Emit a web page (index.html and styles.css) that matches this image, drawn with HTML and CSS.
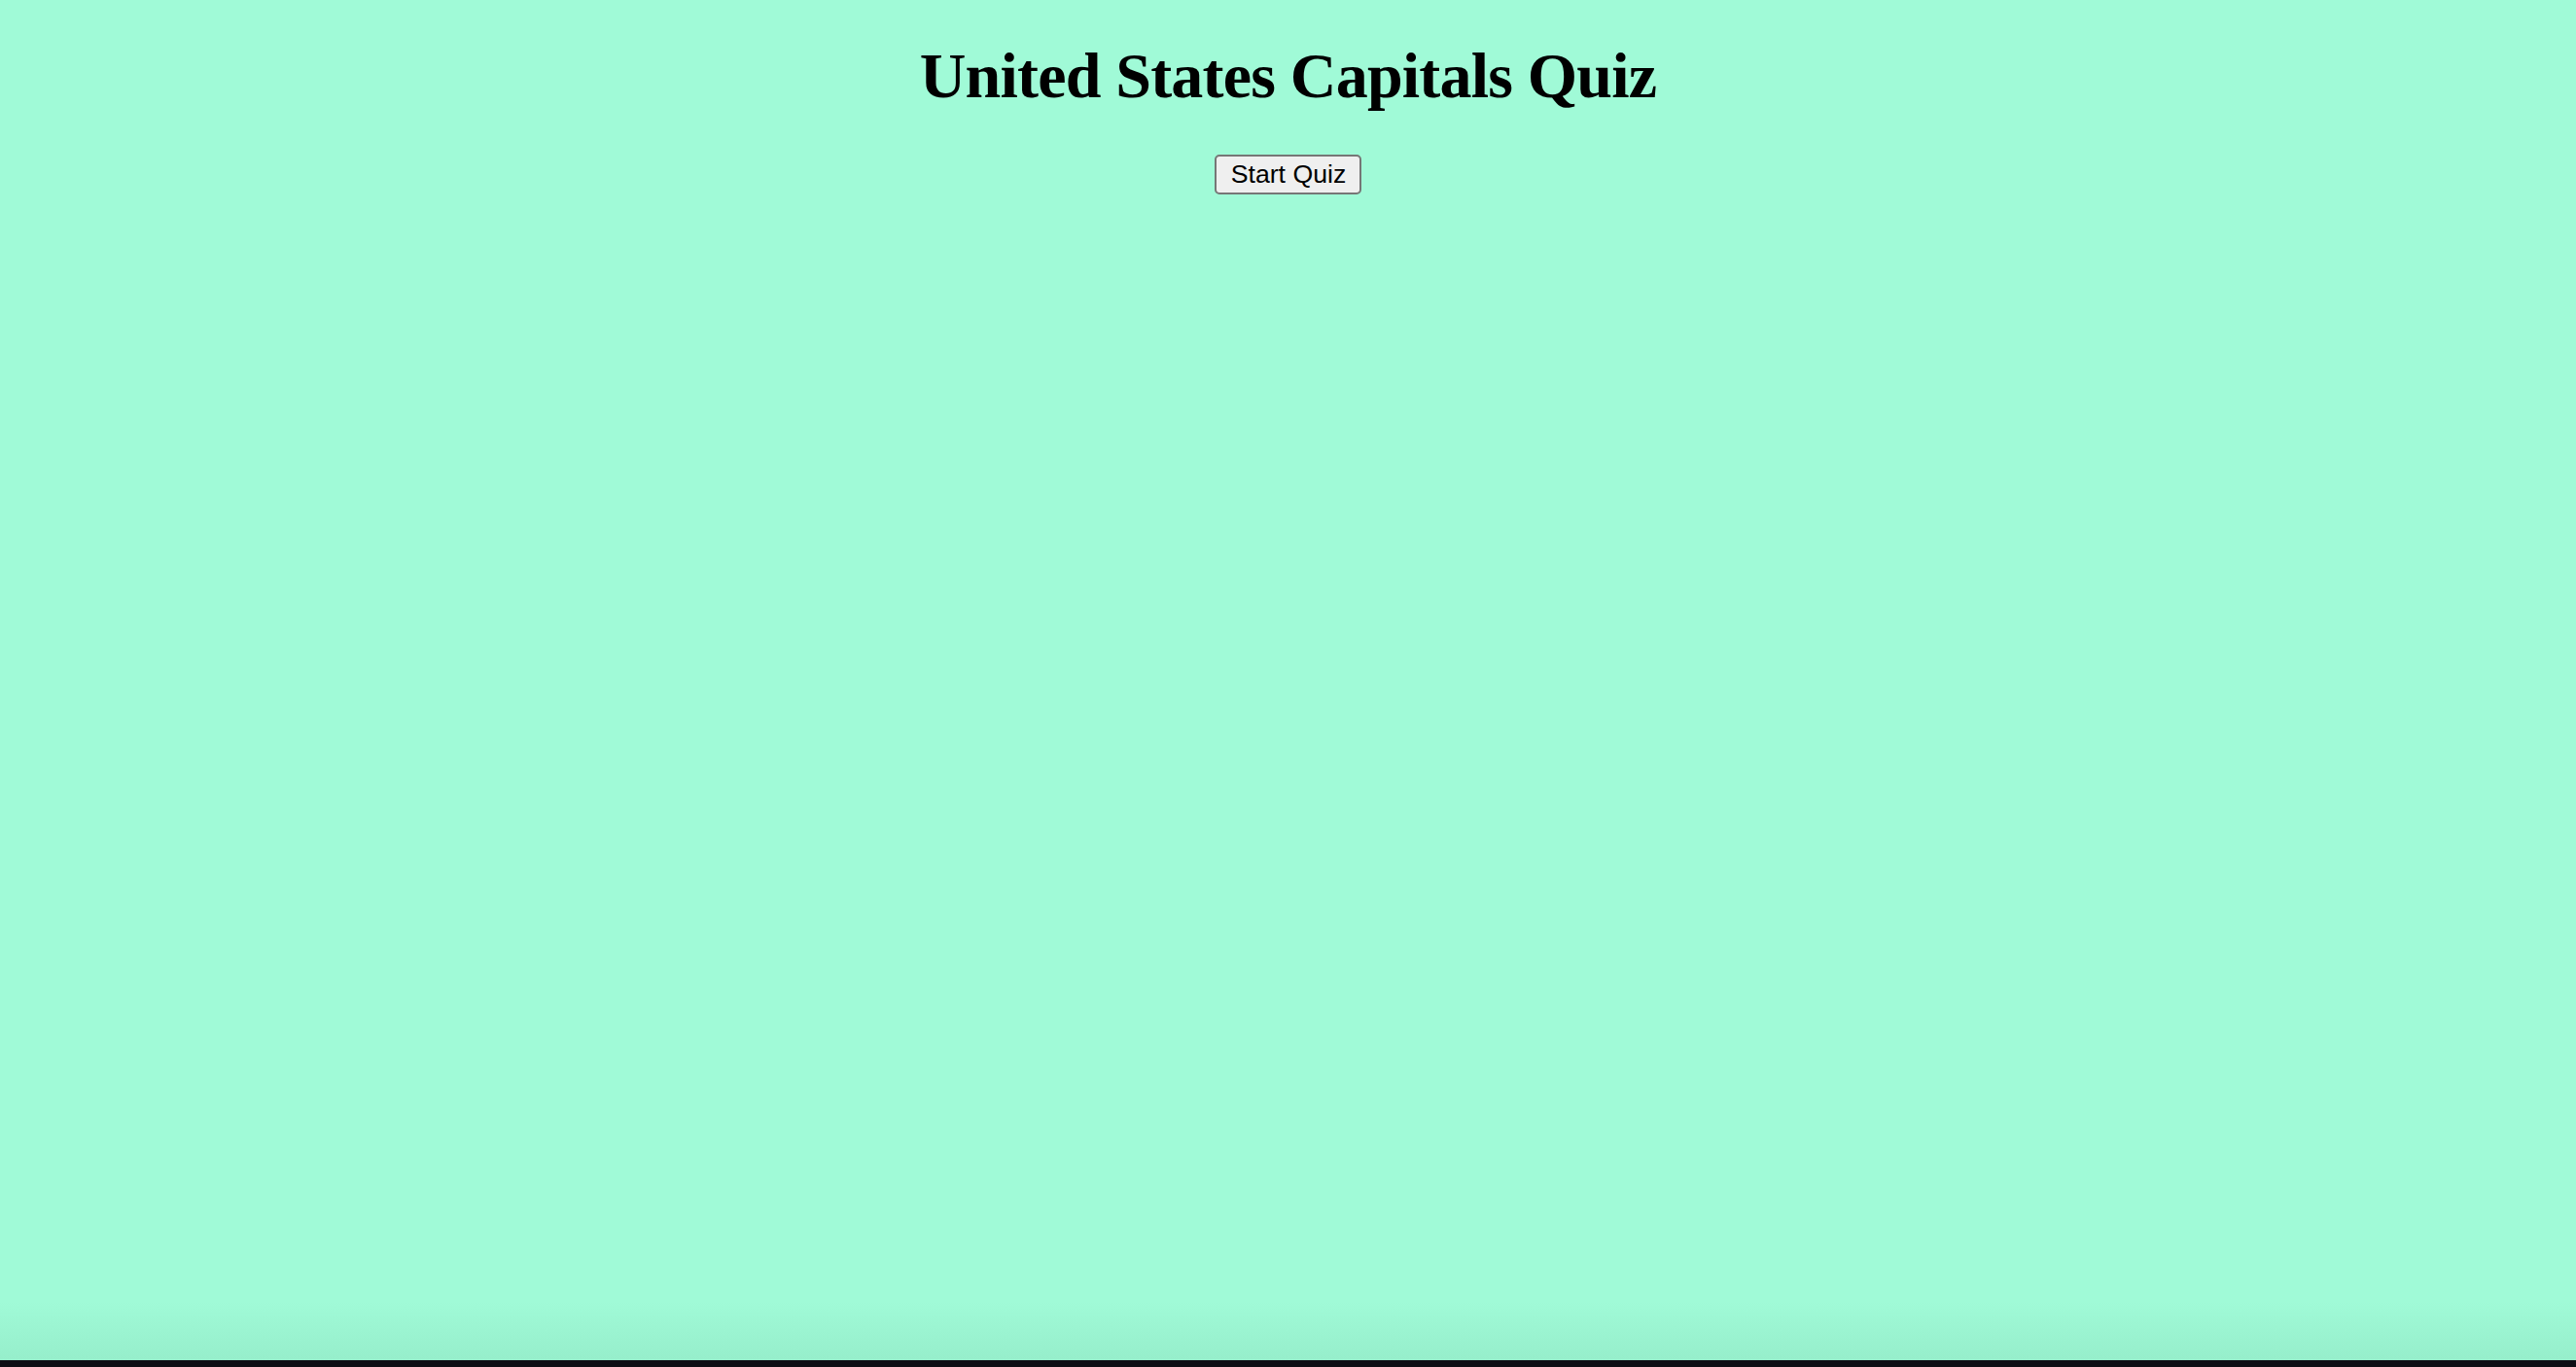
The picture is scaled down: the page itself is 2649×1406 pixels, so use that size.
FILE: index.html
```html
<!DOCTYPE html>
<html lang="en">
<head>
<meta charset="utf-8">
<title>United States Capitals Quiz</title>
<link rel="stylesheet" href="styles.css">
</head>
<body>
<div class="page">
  <main class="quiz">
    <h1 class="title">United States Capitals Quiz</h1>
    <div class="actions">
      <button class="start-btn" type="button">Start Quiz</button>
    </div>
  </main>
  <div class="shade"></div>
</div>
<div class="edge"></div>
</body>
</html>
```
FILE: styles.css
```css
html, body {
  margin: 0;
  padding: 0;
  height: 100%;
}
body {
  display: flex;
  flex-direction: column;
  background: #0d0d14;
  font-family: "Liberation Serif", "Times New Roman", serif;
}
.page {
  flex: 1;
  display: flex;
  flex-direction: column;
  background: #a0fad7;
}
.quiz {
  flex: 1;
  display: flex;
  flex-direction: column;
  align-items: center;
}
.title {
  margin: 42px 0 0;
  font-size: 66px;
  letter-spacing: -0.8px;
  font-weight: bold;
  line-height: 71px;
  color: #000;
}
.actions {
  margin-top: 46px;
}
.start-btn {
  font-family: "Liberation Sans", Arial, sans-serif;
  font-size: 26.67px;
  line-height: 31px;
  padding: 3px 14px 3px 15px;
  background: #efefef;
  color: #000;
  border: 2px solid #767676;
  border-radius: 5px;
}
.shade {
  height: 60px;
  background: linear-gradient(to bottom, #a0fad7, #96eecb);
}
.edge {
  height: 7px;
  background: #0d0d14;
}
```
